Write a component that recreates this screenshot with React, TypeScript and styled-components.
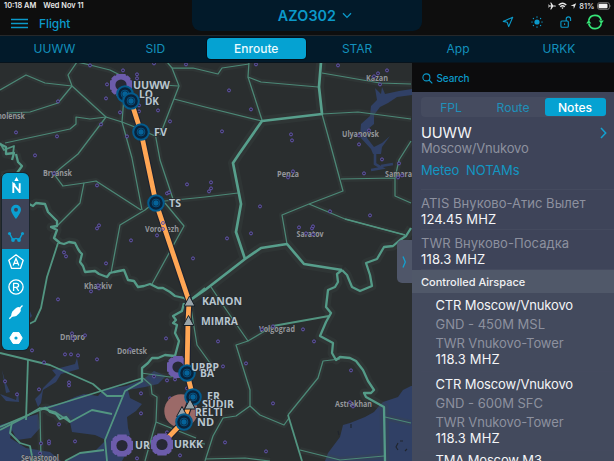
import React from "react";
import styled, { createGlobalStyle } from "styled-components";

const GlobalStyle = createGlobalStyle`
  * { box-sizing: border-box; }
  body { margin: 0; background: #0e0e0e; overflow: hidden; font-family: Inter, "Liberation Sans", sans-serif; }
`;

const BLUE = "#0b99c9";

const Screen = styled.div`
  width: 614px;
  height: 461px;
  display: flex;
  flex-direction: column;
  overflow: hidden;
  background: #0e0e0e;
`;

const Header = styled.header`
  height: 35px;
  flex: none;
  display: grid;
  grid-template-columns: 192px 230px 192px;
`;

const HeaderLeft = styled.div`
  display: flex;
  flex-direction: column;
`;

const StatusText = styled.div`
  display: flex;
  gap: 7px;
  height: 12px;
  padding-left: 4px;
  color: #e8e8e8;
  font-size: 7.4px;
  font-weight: 600;
  line-height: 12px;
  white-space: nowrap;
`;

const NavRow = styled.div`
  display: flex;
  align-items: center;
  gap: 11px;
  height: 22px;
  padding-left: 11px;
`;

const NavTitle = styled.span`
  color: ${BLUE};
  font-size: 12px;
  font-weight: 500;
  letter-spacing: -0.1px;
`;

const FlightName = styled.div`
  height: 31px;
  display: flex;
  align-items: center;
  justify-content: center;
  gap: 6px;
  padding-left: 23px;
  padding-right: 7px;
  background: #021a2a;
  border-radius: 0 0 9px 9px;
  color: ${BLUE};
  font-size: 14.3px;
  font-weight: 600;
  letter-spacing: 0.1px;
`;

const HeaderRight = styled.div`
  display: flex;
  flex-direction: column;
  align-items: flex-end;
`;

const StatusIcons = styled.div`
  display: flex;
  align-items: center;
  height: 12px;
  gap: 2.5px;
  padding-right: 2px;
  color: #e8e8e8;
  font-size: 7.5px;
  font-weight: 500;
`;

const ToolIcons = styled.div`
  display: flex;
  align-items: center;
  height: 20px;
  gap: 17px;
  padding-right: 10px;

  & > :last-child {
    margin-left: -3px;
  }
`;

const Tabs = styled.nav`
  height: 28px;
  flex: none;
  display: grid;
  grid-template-columns: repeat(6, 100.9px);
  padding: 2px 4px 3px;
  background: #021a2a;
  border-top: 1px solid #26282a;
  border-bottom: 1px solid #07131c;
`;

const Tab = styled.div<{ $active?: boolean }>`
  display: flex;
  align-items: center;
  justify-content: center;
  margin: 0 1px;
  border-radius: 4px;
  font-size: 12px;
  color: ${(p) => (p.$active ? "#e9fbff" : "#1391bd")};
  background: ${(p) => (p.$active ? "#05a2d2" : "transparent")};
  box-shadow: ${(p) => (p.$active ? "0 0 0 1px #04101a" : "none")};
  font-weight: ${(p) => (p.$active ? 500 : 400)};
`;

const Body = styled.main`
  flex: 1;
  display: grid;
  grid-template-columns: 411.5px 202.5px;
  min-height: 0;
`;

const MapArea = styled.section`
  position: relative;
  overflow: hidden;
  background: #2a2e2f;
`;

const MapDrawing = styled.svg`
  display: block;
`;

const ToolStrip = styled.div`
  position: absolute;
  left: 2px;
  top: 110px;
  width: 27px;
  border-radius: 6px;
  overflow: hidden;
  box-shadow: 0 0 0 1px #1b252b;
`;

const ToolButton = styled.div<{ $dark?: boolean; $tall?: boolean }>`
  height: ${(p) => (p.$tall ? 26 : 25)}px;
  display: flex;
  align-items: center;
  justify-content: center;
  background: ${(p) => (p.$dark ? "#3e4357" : "#05a2d2")};
`;

const DrawerHandle = styled.div`
  position: absolute;
  right: 0;
  top: 177px;
  width: 15px;
  height: 43px;
  display: flex;
  align-items: center;
  justify-content: center;
  border-radius: 5px 0 0 5px;
  background: #4f5669;
`;

const Sidebar = styled.aside`
  overflow: hidden;
  background: #3e4459;
`;

const SearchBar = styled.div`
  height: 29px;
  display: flex;
  align-items: center;
  gap: 4px;
  padding: 1px 0 0 10px;
  background: #0c0c0d;
  color: ${BLUE};
  font-size: 10px;
  font-weight: 500;
  letter-spacing: -0.1px;
`;

const Segments = styled.div`
  display: grid;
  grid-template-columns: 61px 63px 61px;
  height: 20px;
  margin: 5px 8px 0 9px;
  padding: 1px 1px 1px 0;
  border-radius: 4px;
  background: #454b5f;
`;

const Segment = styled.div<{ $active?: boolean }>`
  display: flex;
  align-items: center;
  justify-content: center;
  border-radius: 3px;
  font-size: 12.1px;
  color: ${(p) => (p.$active ? "#fff" : "#1f90ba")};
  background: ${(p) => (p.$active ? "#05a2d2" : "transparent")};
  font-weight: ${(p) => (p.$active ? 500 : 400)};
`;

const Section = styled.div<{ $height: number; $pad: number; $indent?: boolean }>`
  height: ${(p) => p.$height}px;
  margin-left: 9.5px;
  padding: ${(p) => p.$pad}px 0 0 ${(p) => (p.$indent ? 14.5 : 0)}px;
  border-bottom: 1px solid #444a5e;
`;

const AirspaceList = styled.div`
  height: 180px;
  background: #434a5d;
`;

const Line = styled.div<{ $tone?: "muted" | "link"; $size?: number; $track?: number; $h?: number }>`
  display: flex;
  align-items: center;
  justify-content: space-between;
  padding-right: 7px;
  height: ${(p) => p.$h ?? 16}px;
  white-space: pre;
  font-size: ${(p) => p.$size ?? 13}px;
  letter-spacing: ${(p) => p.$track ?? 0}px;
  color: ${(p) => (p.$tone === "muted" ? "#8d919f" : p.$tone === "link" ? "#1396c2" : "#f4f5f7")};
`;

const Banner = styled.div`
  height: 23px;
  display: flex;
  align-items: center;
  padding-left: 9.5px;
  background: #505869;
  color: #f0f1f3;
  font-size: 11px;
  font-weight: 500;
`;

const THIN = [
  "0,90 26,75 45,83 72,86", "77,62 68,75 72,86 106,117 78,154 62,167 54,174 63,186 84,183",
  "77,62 90,65 110,70 122,76", "72,86 58,103 30,112 7,113", "5,143 70,129 76,124 76,117 90,119 106,117",
  "106,117 122,122 140,129 155,136", "125,85 122,122 132,158 142,210", "167,62 172,68 179,86 160,135",
  "172,68 193,68 218,74 222,68 249,64", "150,84 178,86", "174,99 205,107 262,121", "155,133 160,160 173,199",
  "249,62 248,77 261,82 318,87", "248,77 262,120", "322,73 380,83 411,84", "322,114 358,112 411,119",
  "322,114 333,154 343,191 309,204 282,215 287,244", "309,204 345,219 405,235", "341,179 395,178 395,196 411,203",
  "411,141 399,160 395,178", "57,226 80,203 84,183 96,181 141,210", "155,202 145,210 120,225 111,273",
  "165,203 184,226 152,284", "155,202 205,197 238,193", "211,287 225,308 248,341 236,345 250,390 250,406 236,416 223,418 213,436 205,461",
  "248,341 273,326", "250,406 260,415 284,425 289,418", "288,415 318,378 323,361 340,359", "300,450 340,460 384,456",
  "385,417 411,423", "205,459 245,458 270,461", "143,378 151,385 152,394 157,397 156,422 145,461", "156,422 196,438",
  "141,373 170,377 177,376", "40,411 41,461", "190,302 197,345 215,370", "205,444 190,442",
];
const MEDIUM = [
  "273,326 329,316", "58,243 47,277 41,308 35,321 27,325", "0,353 50,365 93,384 107,396 123,396", "28,359 26,420",
  "0,427 40,410 143,378", "0,430 25,417 40,408 55,412 70,422 92,410 112,414", "12,422 10,433 20,443 30,446 33,461",
  "65,461 80,453 104,450", "288,415 302,461", "143,381 125,391 105,440 107,461", "345,219 405,235",
  "0,143 4,150 14,146 13,154", "189,301 205,288",
];
const THICK = [
  "321,62 319,87 322,114 262,121 239,154 233,163 241,204 236,232 245,259",
  "189,301 205,290 245,259 261,248 287,244 304,264 342,270",
];
const RAGGED = [
  "16,154 18,162 22,166 17,173 8,174 2,176", "29,204 33,206 36,203 45,204 48,212 57,221 57,226 51,227 57,230 54,238 60,243 64,244 69,242 75,243 78,249 80,252 82,254 80,262 83,266 85,272 95,271 99,274 107,277 110,273 114,272 124,270 128,280 134,281 138,287 144,286 150,284 158,288 163,288 170,292 175,296 184,298 189,301",
  "342,270 347,275 352,287 360,291 372,286 370,275 366,263 377,259 384,247 393,246 400,240 406,236 411,228",
  "342,270 337,274 338,282 335,287 328,290 326,307 331,313 326,322 320,336 333,343 332,353 336,360 340,357 350,358 356,361 363,370 368,381 374,390 371,393 364,393 366,397 384,407 385,461",
  "184,303 182,311 173,316 176,320 173,323 177,325 175,333 179,341 175,356 165,355 158,358 152,358 148,363 142,368 142,381",
  "41,409 46,408 50,412 56,414 60,419 66,417 70,422", "0,144 6,147 6,154 14,153 12,160",
];

const DOTS: [number, number][] = [
  [90,65],[123,70],[137,74],[137,78],[154,63],[107,84],[106,98],[58,101],[16,132],[57,136],[101,124],[120,112],[139,111],[158,110],[170,121],[127,136],[139,105],[186,64],
  [256,64],[229,90],[251,109],[222,131],[291,134],[292,140],[338,65],[387,70],[378,73],[374,76],[380,84],[369,130],[359,135],[359,144],
  [35,155],[54,173],[97,185],[187,184],[167,193],[169,192],[97,228],[99,225],[131,240],[163,223],[163,229],[157,235],[193,258],[106,263],[64,252],[66,256],[91,291],[98,285],[99,288],[58,299],
  [211,182],[211,188],[209,191],[293,171],[288,177],[260,206],[251,233],[227,238],[299,227],[312,228],[313,226],[306,233],[313,234],[330,211],[364,173],[382,159],[399,163],[370,215],[402,175],[398,177],
  [72,333],[73,338],[85,335],[32,350],[65,354],[71,354],[78,355],[97,359],[130,349],[44,362],[5,381],[17,394],[39,389],[69,382],[69,385],[141,393],[141,413],[59,424],[41,443],[49,443],[49,441],[75,441],[40,453],[137,458],[154,376],[167,380],[175,379],[170,398],[187,388],[166,338],[180,455],[167,432],
  [218,341],[262,329],[273,326],[303,329],[314,341],[246,363],[223,366],[273,403],[351,370],[350,402],[353,406],[225,442],[266,451],
];

const CITIES: [string, number, number, number][] = [
  ["Smolensk", -9, 118.5, 34], ["Kazan", 366, 81, 22], ["Ulyanovsk", 342, 136.5, 37], ["Bryansk", 43, 175.5, 29],
  ["Voronezh", 145, 232, 34], ["Penza", 277, 177, 22], ["Saratov", 296.5, 236.5, 27], ["Samara", 385, 177, 27],
  ["Kharkiv", 84, 289, 28], ["Dnipro", 60, 339.5, 25], ["Donetsk", 117, 354, 30], ["Volgograd", 259, 332, 36],
  ["Astrakhan", 335, 407, 37], ["Sevastopol", 21, 461, 38],
];

const FIXES: [string, number, number, number][] = [
  ["UUWW", 133, 88.5, 37], ["LO", 139, 98, 14], ["DK", 145, 105, 14], ["FV", 154, 136, 13], ["TS", 169, 207, 12],
  ["KANON", 202, 305, 40], ["MIMRA", 201, 325, 37], ["URRP", 191, 371, 28], ["BA", 200, 377, 14], ["ER", 207, 400, 13],
  ["SUDIR", 202, 408, 32], ["RELTI", 195, 416, 28], ["ND", 197, 426, 17], ["URKK", 174, 448, 29], ["UR", 135, 449, 15],
];

const Airport = ({ x, y }: { x: number; y: number }) => (
  <g transform={`translate(${x} ${y})`}>
    <path d="M-4.5-11H4.5L5-9.3 6.8-9.6 9.6-6.8 9.3-5 11-4.5V4.5L9.3 5 9.6 6.8 6.8 9.6 5 9.3 4.5 11H-4.5L-5 9.3-6.8 9.6-9.6 6.8-9.3 5-11 4.5V-4.5L-9.3-5-9.6-6.8-6.8-9.6-5-9.3Z" fill="#6c5cab" />
    <circle r="5.6" fill="#272936" />
  </g>
);

const Beacon = ({ x, y }: { x: number; y: number }) => (
  <g transform={`translate(${x} ${y})`}>
    <circle r="7.8" fill="#08233c" stroke="#045b8d" strokeWidth="2" />
    <circle r="3.9" fill="#08233c" stroke="#075484" strokeWidth="1" />
    <circle r="2.7" fill="#05639a" />
  </g>
);

const Triangle = ({ x, y }: { x: number; y: number }) => (
  <path d={`M${x} ${y - 5.5}L${x + 5.4} ${y + 4.5}H${x - 5.4}Z`} fill="#98a3a8" stroke="#182028" strokeWidth="1" />
);

const Lines = ({ paths, width, color }: { paths: string[]; width: number; color: string }) => (
  <g fill="none" stroke={color} strokeWidth={width} strokeLinejoin="round">
    {paths.map((p, i) => <polyline key={i} points={p} />)}
  </g>
);

const ROUTE = "125,94 131,101 141,132 156,203 189,301 188,321 187,373 193,397 190,403 183,422 162,444";

const ChartMap = () => (
  <MapDrawing width="412" height="398" viewBox="0 63 412 398">
    <g fill="#304065">
      <path d="M411 386L403 390 398 397 383 402 379 406 374 412 365 417 350 423 343 425 340 437 328 453 325 461H412V386Z" />
      <path d="M42 407L62 403 75 397 84 394 98 396 104 389 126 386 142 380 154 371 166 376 158 384 145 387 128 390 130 398 142 404 136 411 127 417 128 428 130 435 118 443 127 452 122 461H67L78 454 96 450 106 440 95 435 72 432 70 422 57 414Z" />
      <path d="M0 425L23 418 38 414 40 428 31 438 17 440 12 430 10 438 26 448 50 452 61 461H0Z" />
      <path d="M43 388L56 375 52 370 75 364 77 358 79 369 61 374 56 382 43 390 41 403 38 407 35 399 41 393ZM0 394L16 400 18 391 19 402 6 401ZM2 370L5 381 10 392 6 393Z" />
      <path d="M22 309H29L32 316 28 320Z" />
      <path d="M375 88L381 94 382 87 385 94 399 91 412 89V95L397 97 388 103 380 107 374 115 374 124 368 129 367 138 374 147 382 143 390 136 382 147 381 154H373L371 149 360 137 361 124 370 116 371 106 377 100Z" />
    </g>
    <path d="M375 153L375 164 382 168 371 170M381 166L393 164" fill="none" stroke="#304065" strokeWidth="2.6" />
    <g fill="none" stroke="#20252d" strokeWidth="1.1">
      <path d="M398 443L396 447 398 450M403 441H400M407 449L405 451M351 424V428M338 431L339 435" />
    </g>
    <g opacity=".28">
      <Lines paths={THIN} width={6} color="#3c4946" />
      <Lines paths={THICK} width={10} color="#3c4946" />
      <Lines paths={RAGGED} width={9} color="#3c4946" />
    </g>
    <Lines paths={THIN} width={1.25} color="#4c8977" />
    <Lines paths={MEDIUM} width={1.8} color="#529581" />
    <Lines paths={RAGGED} width={2.3} color="#549b88" />
    <Lines paths={THICK} width={2.7} color="#579f8c" />
    <g fontFamily='"Open Sans", "Noto Sans", sans-serif' fontWeight="700" fontSize="9.2" fill="#94969a" stroke="#292d2e" strokeWidth=".7" paintOrder="stroke">
      {CITIES.map(([t, x, y, w]) => <text key={t} x={x} y={y} textLength={w} lengthAdjust="spacingAndGlyphs">{t}</text>)}
    </g>
    <g fill="#2a2940" stroke="#6355ab" strokeWidth="1">
      {DOTS.map(([x, y], i) => <circle key={i} cx={x} cy={y + 0.4} r="1.5" />)}
    </g>
    <circle cx="181" cy="411" r="16.7" fill="#9b6a68" />
    <Airport x={121} y={85} />
    <Airport x={178} y={367} />
    <Airport x={122} y={445.5} />
    <polyline points={ROUTE} fill="none" stroke="#1c2230" strokeWidth="7" />
    <polyline points={ROUTE} fill="none" stroke="#ffa654" strokeWidth="4.8" />
    <g fill="none" stroke="#6355ab"><circle cx="163" cy="223" r="1.5" /><circle cx="163" cy="229" r="1.5" /></g>
    <Airport x={162} y={444.5} />
    <Beacon x={125} y={94} />
    <Beacon x={131} y={101} />
    <Beacon x={141} y={132} />
    <Beacon x={156} y={203} />
    <Beacon x={187} y={373} />
    <Beacon x={193} y={397} />
    <Triangle x={189.5} y={301.5} />
    <Triangle x={188.5} y={321} />
    <Triangle x={182} y={412} />
    <Triangle x={190} y={404.5} />
    <Beacon x={184} y={422} />
    <g fontFamily='"Open Sans", "Noto Sans", sans-serif' fontWeight="700" fontSize="10.8" fill="#b8c5ce" stroke="#252b30" strokeWidth="1.4" paintOrder="stroke">
      {FIXES.map(([t, x, y, w]) => <text key={t} x={x} y={y} textLength={w} lengthAdjust="spacingAndGlyphs">{t}</text>)}
    </g>
  </MapDrawing>
);

const MapTools = () => (
  <ToolStrip>
    <ToolButton $tall>
      <svg width="20" height="24" viewBox="0 0 20 24">
        <path d="M10.5 3L12.7 7H8.3Z" fill="#fff" />
        <path d="M7.3 19V10.2L13.7 17.8M13.7 9.2V19M7.3 9.2L9 11.4" fill="none" stroke="#fff" strokeWidth="1.9" />
      </svg>
    </ToolButton>
    <ToolButton $dark>
      <svg width="12" height="16" viewBox="0 0 12 16"><path fillRule="evenodd" d="M6 0.8A5 5 0 0 0 1 5.8C1 9 6 15 6 15S11 9 11 5.8A5 5 0 0 0 6 .8ZM6 3.8A2 2 0 1 1 6 7.8 2 2 0 0 1 6 3.8Z" fill="#0b9fd0" /></svg>
    </ToolButton>
    <ToolButton $dark>
      <svg width="18" height="14" viewBox="0 0 18 14">
        <path d="M2.5 3.5L6 10Q9 7 12 10L15.5 3.5" fill="none" stroke="#0b9fd0" strokeWidth="1.5" />
        <g fill="#0b9fd0"><circle cx="2.5" cy="3.5" r="1.5" /><circle cx="6" cy="10" r="1.9" /><circle cx="12" cy="10" r="1.9" /><circle cx="15.5" cy="3.5" r="1.5" /></g>
      </svg>
    </ToolButton>
    <ToolButton>
      <svg width="18" height="18" viewBox="0 0 18 18" fill="none" stroke="#fff" strokeWidth="1.3">
        <path d="M9 1.8L16.2 7.2 13.5 15.3H4.5L1.8 7.2Z" strokeLinejoin="round" />
        <path d="M6.2 12.5L9 5.5 11.8 12.5M7 10.3H11" />
      </svg>
    </ToolButton>
    <ToolButton>
      <svg width="18" height="18" viewBox="0 0 18 18" fill="none" stroke="#fff" strokeWidth="1.3">
        <circle cx="9" cy="9" r="7.1" />
        <path d="M6.6 13V5.3H9.3Q11.6 5.3 11.6 7.3T9.3 9.3H6.6M9.3 9.3L11.7 13" />
      </svg>
    </ToolButton>
    <ToolButton $tall>
      <svg width="18" height="18" viewBox="0 0 18 18">
        <path d="M15.5 2.5L12.5 5.5M6 12L2.3 15.7" stroke="#fff" strokeWidth="1.3" />
        <path d="M13.6 5.2Q14.6 7.7 12.3 10.2L9.3 13Q7 14 4.2 13.8 4 11 5.2 8.8L8.2 5.7Q10.6 3.4 12.8 4.4Z" fill="#fff" />
      </svg>
    </ToolButton>
    <ToolButton>
      <svg width="16" height="16" viewBox="0 0 16 16">
        <path d="M5 2.6H11L14.2 8 11 13.4H5L1.8 8Z" fill="#fff" stroke="#fff" strokeLinejoin="round" />
        <circle cx="8" cy="8" r="1.6" fill="#05a2d2" />
      </svg>
    </ToolButton>
  </ToolStrip>
);

const TopBar = () => (
  <Header>
    <HeaderLeft>
      <StatusText><span>10:18 AM</span><span>Wed Nov 11</span></StatusText>
      <NavRow>
        <svg width="17" height="11" viewBox="0 0 17 11" stroke={BLUE} strokeWidth="1.3"><path d="M0 1.5H17M0 5.5H17M0 9.5H17" /></svg>
        <NavTitle>Flight</NavTitle>
      </NavRow>
    </HeaderLeft>
    <FlightName>
      AZO302
      <svg width="10" height="7" viewBox="0 0 10 7" fill="none" stroke={BLUE} strokeWidth="1.3"><path d="M1 1.3L5 5.4 9 1.3" /></svg>
    </FlightName>
    <HeaderRight>
      <StatusIcons>
        <svg width="8" height="8" viewBox="0 0 8 8" fill="#e8e8e8"><path d="M8 4Q7.8 3.4 7 3.4H5.2L3.2.6H2.3L3.2 3.4H1.5L.8 2.5H.2L.7 4 .2 5.5H.8L1.5 4.6H3.2L2.3 7.4H3.2L5.2 4.6H7Q7.8 4.6 8 4Z" /></svg>
        <svg width="9" height="8" viewBox="0 0 9 8" fill="none" stroke="#e8e8e8" strokeWidth="1.3"><path d="M.7 3Q4.5-.4 8.3 3M2.2 4.7Q4.5 2.8 6.8 4.7" /><path d="M3.3 5.7Q4.5 4.8 5.7 5.7L4.5 7Z" fill="#e8e8e8" stroke="none" /></svg>
        <svg width="7" height="8" viewBox="0 0 7 8" fill="#e8e8e8"><path d="M6.2 1.2L3.8 7 3.5 4 .6 3.8Z" /></svg>
        <span>81%</span>
        <svg width="15" height="8" viewBox="0 0 15 8"><rect x=".5" y=".7" width="12" height="6.6" rx="2" fill="none" stroke="#8c8c8c" strokeWidth=".8" /><rect x="1.5" y="1.7" width="9" height="4.6" rx="1" fill="#f1f1f1" /><path d="M13.4 3Q14.6 4 13.4 5Z" fill="#999" /></svg>
      </StatusIcons>
      <ToolIcons>
        <svg width="12" height="12" viewBox="0 0 12 12" fill="none" stroke={BLUE} strokeWidth="1.1" strokeLinejoin="round"><path d="M10.7 1.3L1.2 5.4 5.2 6.2 6.7 10.6Z" /></svg>
        <svg width="12" height="12" viewBox="0 0 12 12" stroke={BLUE} strokeWidth="1.2" strokeLinecap="round"><circle cx="6" cy="6" r="2.6" fill={BLUE} stroke="none" /><path d="M6 .8V1.2M6 10.8V11.2M.8 6H1.2M10.8 6H11.2M2.3 2.3L2.5 2.5M9.5 9.5L9.7 9.7M2.3 9.7L2.5 9.5M9.5 2.5L9.7 2.3" /></svg>
        <svg width="12" height="12" viewBox="0 0 12 12" fill="none" stroke={BLUE} strokeWidth="1.1"><rect x=".9" y="5" width="7.4" height="6.2" rx="1" /><path d="M6.2 5V3Q6.2.9 8.4.9T10.6 3V5" /><path d="M4.6 7.2V9" /></svg>
        <svg width="18" height="16" viewBox="0 0 18 16" fill="none" stroke="#36e477" strokeWidth="1.7"><path d="M2.7 6.7A6.4 6.4 0 0 1 15.2 6.3M15.3 9.3A6.4 6.4 0 0 1 2.8 9.7" /><g fill="#36e477" stroke="none"><path d="M12.7 6.6H17.8L15.3 10ZM.2 9.4H5.3L2.7 6Z" /></g></svg>
      </ToolIcons>
    </HeaderRight>
  </Header>
);

const Airspace = ({ limits }: { limits: string }) => (
  <Section $height={79} $pad={3} $indent>
    <Line $h={18} $track={-0.15}>CTR Moscow/Vnukovo</Line>
    <Line $h={20} $tone="muted">{limits}</Line>
    <Line $h={18} $tone="muted" $track={-0.1}>TWR Vnukovo-Tower</Line>
    <Line $h={14} $track={0.15}>118.3 MHZ</Line>
  </Section>
);

export default function App() {
  return (
    <Screen>
      <GlobalStyle />
      <TopBar />
      <Tabs>
        <Tab>UUWW</Tab><Tab>SID</Tab><Tab $active>Enroute</Tab><Tab>STAR</Tab><Tab>App</Tab><Tab>URKK</Tab>
      </Tabs>
      <Body>
        <MapArea>
          <ChartMap />
          <MapTools />
          <DrawerHandle>
            <svg width="5" height="14" viewBox="0 0 5 14" fill="none" stroke="#13a1d0" strokeWidth="1.3"><path d="M1 1.5L3.3 7 1 12.5" /></svg>
          </DrawerHandle>
        </MapArea>
        <Sidebar>
          <SearchBar>
            <svg width="11" height="11" viewBox="0 0 11 11" fill="none" stroke={BLUE} strokeWidth="1.1"><circle cx="4.4" cy="4.4" r="3.5" /><path d="M7 7L10.3 10.3" /></svg>
            Search
          </SearchBar>
          <Segments>
            <Segment>FPL</Segment><Segment>Route</Segment><Segment $active>Notes</Segment>
          </Segments>
          <Section $height={73} $pad={8}>
            <Line $size={14.7} $track={-0.15}>
              UUWW
              <svg width="7" height="12" viewBox="0 0 7 12" fill="none" stroke="#13a1d0" strokeWidth="1.5"><path d="M1 1L5.7 6 1 11" /></svg>
            </Line>
            <Line $tone="muted" $h={14} $track={-0.2}>Moscow/Vnukovo</Line>
            <Line $tone="link" $h={30} $track={-0.15}>Meteo  NOTAMs</Line>
          </Section>
          <Section $height={40} $pad={5}>
            <Line $tone="muted" $track={0.05}>ATIS Внуково-Атис Вылет</Line>
            <Line $track={0.1}>124.45 MHZ</Line>
          </Section>
          <Section $height={40} $pad={5}>
            <Line $tone="muted" $track={0.05}>TWR Внуково-Посадка</Line>
            <Line $track={0.15}>118.3 MHZ</Line>
          </Section>
          <Banner>Controlled Airspace</Banner>
          <AirspaceList>
            <Airspace limits="GND - 450M MSL" />
            <Airspace limits="GND - 600M SFC" />
            <Section $height={30} $pad={0} $indent>
              <Line $h={17} $track={-0.15}>TMA Moscow M3</Line>
            </Section>
          </AirspaceList>
        </Sidebar>
      </Body>
    </Screen>
  );
}
